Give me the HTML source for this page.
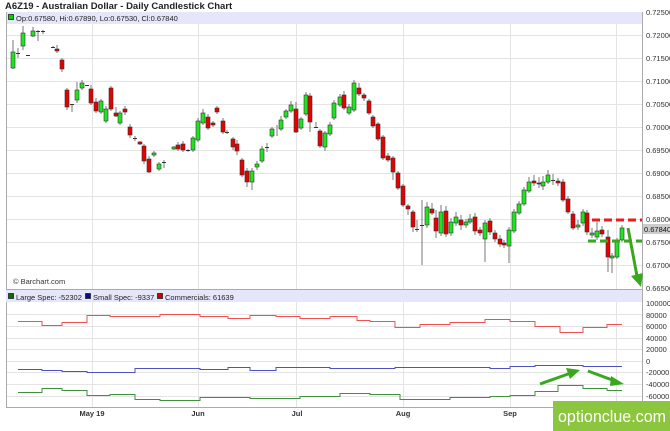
<!DOCTYPE html>
<html><head><meta charset="utf-8"><style>
html,body{margin:0;padding:0;background:#fff;width:670px;height:431px;overflow:hidden}
svg{display:block;font-family:"Liberation Sans",sans-serif}
</style></head><body>
<svg width="670" height="431" viewBox="0 0 670 431">
<text x="5" y="9" font-size="9.5" font-weight="bold" fill="#222">A6Z19 - Australian Dollar - Daily Candlestick Chart</text>
<rect x="6" y="12" width="636" height="12" fill="#e6e6fa"/>
<rect x="8.5" y="14.5" width="5" height="5" fill="#00d000" stroke="#222" stroke-width="0.8"/>
<text x="16" y="21" font-size="7.5" fill="#222">Op:0.67580, Hi:0.67890, Lo:0.67530, Cl:0.67840</text>
<g stroke="#e4e4e4" stroke-width="1">
<path d="M6 35.5H642M6 58.5H642M6 81.5H642M6 104.5H642M6 127.5H642M6 150.5H642M6 173.5H642M6 196.5H642M6 219.5H642M6 242.5H642M6 265.5H642"/>
<path d="M92.5 24V290M198.5 24V290M296.5 24V290M403.5 24V290M510.5 24V290M616.5 24V290"/>
<path d="M92.5 302V407M198.5 302V407M296.5 302V407M403.5 302V407M510.5 302V407M616.5 302V407"/>
<path d="M6 314.5H642M6 326.5H642M6 338.5H642M6 349.5H642M6 361.5H642M6 372.5H642M6 384.5H642M6 396.5H642"/>
</g>
<path d="M6.5 12V407M642.5 12V407M6 289.5H642M6 407.5H642" stroke="#aaa" fill="none"/>
<g font-size="7.5" fill="#333">
<text x="646" y="15">0.72500</text><text x="646" y="38">0.72000</text><text x="646" y="61">0.71500</text><text x="646" y="84">0.71000</text><text x="646" y="107">0.70500</text><text x="646" y="130">0.70000</text><text x="646" y="153">0.69500</text><text x="646" y="176">0.69000</text><text x="646" y="199">0.68500</text><text x="646" y="222">0.68000</text><text x="646" y="245">0.67500</text><text x="646" y="268">0.67000</text><text x="646" y="291">0.66500</text>
<text x="646" y="306">100000</text><text x="646" y="318">80000</text><text x="646" y="329">60000</text><text x="646" y="341">40000</text><text x="646" y="352">20000</text><text x="646" y="364">0</text><text x="646" y="375">-20000</text><text x="646" y="387">-40000</text><text x="646" y="399">-60000</text>
</g>
<rect x="643" y="224" width="27" height="10" fill="#ccc"/>
<text x="644" y="232" font-size="7.5" fill="#111">0.67840</text>
<text x="13" y="284" font-size="7.5" fill="#333">© Barchart.com</text>
<path stroke="#777" stroke-width="1" fill="none" d="M13 40V69M18 48V58M23 26V50M28 55V56M33 27V37M38 30V41M43 30V34M53 46V48M57 45V53M62 58V72M67 88V110M72 104V112M77 82V103M82 80V90M87 85V86M91 85V105M96 98V113M101 99V114M106 106V123M111 86V111M116 107V117M120 111V125M125 106V115M130 124V138M135 136V141M140 141V145M144 144V164M149 156V173M154 151V157M159 162V171M164 160V168M174 146V150M178 142V151M183 141V152M188 149V152M193 136V152M198 118V142M203 109V125M208 114V130M213 121V127M217 106V114M223 118V134M227 130V134M233 137V150M237 140V155M242 158V177M247 168V187M252 168V190M257 161V170M262 146V163M267 143V152M272 127V138M277 125V136M281 116V131M286 109V119M291 101V113M296 102V133M301 117V130M306 92V116M310 93V132M316 122V128M320 129V148M325 131V151M330 122V136M334 100V120M340 94V107M344 91V110M349 104V115M354 80V112M359 83V96M364 93V101M369 99V115M373 115V128M378 122V141M383 135V160M388 153V162M393 156V180M398 171V190M403 184V207M408 204V215M413 210V232M417 220V232M422 200V265M427 202V228M432 203V215M436 210V238M441 205V236M446 206V237M451 218V236M456 212V226M461 215V230M466 219V228M470 214V224M475 213V235M480 227V236M485 220V262M490 218V235M495 230V242M500 235V247M504 240V248M509 227V263M514 209V233M519 201V215M524 187V206M529 177V193M534 175V186M539 177V188M543 176V190M548 170V184M553 174V185M558 178V186M563 179V202M568 196V214M573 211V230M578 220V230M583 209V226M587 210V235M592 228V238M597 222V240M602 226V237M608 230V272M612 253V273M617 238V259M622 225V242"/>
<path stroke="#333" stroke-width="1" d="M16 53.5H20M26 55.5H30M36 31.5H40M41 31.5H45M51 47.5H55M70 104.5H74M85 85.5H89M133 138.5H137M162 162.5H166M186 150.5H190M225 132.5H229M265 147.5H269M314 127.5H318M415 229.5H419M420 225.5H424M551 180.5H555"/>
<g fill="#1ee61e" stroke="#333" stroke-width="0.6">
<rect x="11" y="52" width="4" height="16"/><rect x="21" y="33" width="4" height="13"/><rect x="31" y="31" width="4" height="5"/><rect x="75" y="90" width="4" height="10"/><rect x="80" y="83" width="4" height="5"/><rect x="99" y="101" width="4" height="11"/><rect x="104" y="109" width="4" height="12"/><rect x="118" y="113" width="4" height="10"/><rect x="152" y="153" width="4" height="2"/><rect x="157" y="164" width="4" height="5"/><rect x="172" y="147" width="4" height="2"/><rect x="191" y="138" width="4" height="12"/><rect x="196" y="121" width="4" height="19"/><rect x="201" y="113" width="4" height="10"/><rect x="250" y="171" width="4" height="11"/><rect x="255" y="164" width="4" height="3"/><rect x="260" y="149" width="4" height="12"/><rect x="270" y="129" width="4" height="7"/><rect x="279" y="120" width="4" height="9"/><rect x="284" y="111" width="4" height="6"/><rect x="289" y="105" width="4" height="6"/><rect x="299" y="119" width="4" height="9"/><rect x="304" y="95" width="4" height="19"/><rect x="323" y="133" width="4" height="14"/><rect x="328" y="125" width="4" height="9"/><rect x="332" y="103" width="4" height="15"/><rect x="338" y="97" width="4" height="8"/><rect x="347" y="107" width="4" height="6"/><rect x="352" y="83" width="4" height="27"/>
<rect x="425" y="207" width="4" height="18"/><rect x="439" y="212" width="4" height="21"/><rect x="449" y="222" width="4" height="11"/><rect x="454" y="217" width="4" height="6"/><rect x="464" y="222" width="4" height="3"/><rect x="468" y="219" width="4" height="3"/><rect x="483" y="223" width="4" height="16"/><rect x="507" y="230" width="4" height="16"/><rect x="512" y="212" width="4" height="19"/><rect x="517" y="204" width="4" height="9"/><rect x="522" y="190" width="4" height="14"/><rect x="527" y="182" width="4" height="9"/><rect x="541" y="182" width="4" height="4"/><rect x="546" y="175" width="4" height="7"/><rect x="576" y="225" width="4" height="2"/><rect x="581" y="212" width="4" height="11"/><rect x="590" y="233" width="4" height="2"/><rect x="595" y="231" width="4" height="6"/><rect x="610" y="256" width="4" height="2"/><rect x="615" y="242" width="4" height="15"/><rect x="620" y="228" width="4" height="12"/>
</g>
<g fill="#e60000" stroke="#333" stroke-width="0.6">
<rect x="55" y="49" width="4" height="2"/><rect x="60" y="60" width="4" height="9"/><rect x="65" y="90" width="4" height="17"/><rect x="89" y="89" width="4" height="14"/><rect x="94" y="102" width="4" height="9"/><rect x="109" y="88" width="4" height="21"/><rect x="114" y="113" width="4" height="3"/><rect x="123" y="109" width="4" height="3"/><rect x="128" y="127" width="4" height="8"/><rect x="138" y="142" width="4" height="2"/><rect x="142" y="146" width="4" height="15"/><rect x="147" y="159" width="4" height="13"/><rect x="176" y="145" width="4" height="4"/><rect x="181" y="144" width="4" height="6"/><rect x="206" y="117" width="4" height="11"/><rect x="211" y="123" width="4" height="2"/><rect x="215" y="108" width="4" height="4"/><rect x="221" y="121" width="4" height="11"/><rect x="231" y="139" width="4" height="8"/><rect x="235" y="144" width="4" height="7"/><rect x="240" y="160" width="4" height="15"/><rect x="245" y="171" width="4" height="11"/><rect x="294" y="109" width="4" height="23"/><rect x="308" y="96" width="4" height="26"/><rect x="318" y="131" width="4" height="15"/><rect x="342" y="95" width="4" height="13"/><rect x="357" y="88" width="4" height="6"/><rect x="362" y="95" width="4" height="3"/><rect x="367" y="101" width="4" height="12"/><rect x="371" y="117" width="4" height="9"/><rect x="376" y="124" width="4" height="15"/><rect x="381" y="137" width="4" height="21"/><rect x="386" y="156" width="4" height="4"/><rect x="391" y="158" width="4" height="14"/><rect x="396" y="173" width="4" height="15"/><rect x="401" y="186" width="4" height="19"/><rect x="406" y="206" width="4" height="3"/><rect x="411" y="212" width="4" height="15"/><rect x="430" y="209" width="4" height="4"/><rect x="434" y="218" width="4" height="13"/><rect x="444" y="211" width="4" height="23"/><rect x="459" y="220" width="4" height="5"/><rect x="473" y="217" width="4" height="14"/><rect x="478" y="230" width="4" height="3"/><rect x="488" y="221" width="4" height="11"/><rect x="493" y="233" width="4" height="6"/><rect x="498" y="239" width="4" height="5"/><rect x="502" y="243" width="4" height="2"/><rect x="532" y="181" width="4" height="2"/><rect x="537" y="183" width="4" height="1"/><rect x="556" y="181" width="4" height="2"/><rect x="561" y="182" width="4" height="18"/><rect x="566" y="199" width="4" height="13"/><rect x="571" y="214" width="4" height="14"/><rect x="585" y="213" width="4" height="19"/><rect x="600" y="230" width="4" height="4"/><rect x="606" y="237" width="4" height="20"/>
</g>
<path d="M592 220H642" stroke="#e61e1e" stroke-width="3" stroke-dasharray="8,4"/>
<path d="M588 241H642" stroke="#3aa81e" stroke-width="3" stroke-dasharray="8,4"/>
<path d="M628 228L637 276" stroke="#3aa81e" stroke-width="3"/>
<path d="M631 276L641 287L643 273Z" fill="#3aa81e"/>
<rect x="6" y="290" width="636" height="12" fill="#e6e6fa"/>
<g stroke="#222" stroke-width="0.8"><rect x="8.5" y="293.5" width="5" height="5" fill="#0a6a0a"/><rect x="85.5" y="293.5" width="5" height="5" fill="#0a0a8a"/><rect x="157.5" y="293.5" width="5" height="5" fill="#c00"/></g>
<g font-size="7.5" fill="#222"><text x="16" y="300">Large Spec: -52302</text><text x="93" y="300">Small Spec: -9337</text><text x="165" y="300">Commercials: 61639</text></g>
<path fill="none" stroke="#f05050" stroke-width="1" d="M18 321.5H42V325.5H62V322.5H87V315.5H110V316.5H160V314.5H200V316.5H228V318.5H250V315.5H276V316.5H300V318.5H330V316.5H357V320.5H370V321.5H395V327.5H420V324.5H450V322.5H485V319.5H510V321.5H535V326.5H560V332.5H583V327.5H607V324.5H622"/>
<path fill="none" stroke="#5050c0" stroke-width="1" d="M18 369.5H42V370.5H62V371.5H87V372.5H135V368.5H200V369.5H228V367.5H250V370.5H276V367.5H330V368.5H395V367.5H450V367.5H490V368.5H510V366.5H535V365.5H583V366.5H622"/>
<path fill="none" stroke="#409040" stroke-width="1" d="M18 392.5H42V388.5H62V390.5H87V395.5H110V394.5H135V399.5H160V400.5H200V397.5H250V398.5H300V396.5H340V393.5H370V394.5H400V399.5H450V397.5H490V396.5H510V395.5H535V391.5H558V385.5H583V388.5H607V390.5H622"/>
<path d="M540 384L571 373" stroke="#3aa81e" stroke-width="3"/>
<path d="M566 368L580 370L570 379Z" fill="#3aa81e"/>
<path d="M588 371L615 381" stroke="#3aa81e" stroke-width="3"/>
<path d="M611 376L624 384L610 386Z" fill="#3aa81e"/>
<g font-size="7.5" font-weight="bold" fill="#333" text-anchor="middle"><text x="92" y="416">May 19</text><text x="198" y="416">Jun</text><text x="297" y="416">Jul</text><text x="403" y="416">Aug</text><text x="510" y="416">Sep</text></g>
<rect x="553" y="401" width="117" height="30" fill="#8cc63f"/>
<text x="558" y="422" font-size="17" fill="#fff" textLength="108" lengthAdjust="spacingAndGlyphs">optionclue.com</text>
</svg>
</body></html>
